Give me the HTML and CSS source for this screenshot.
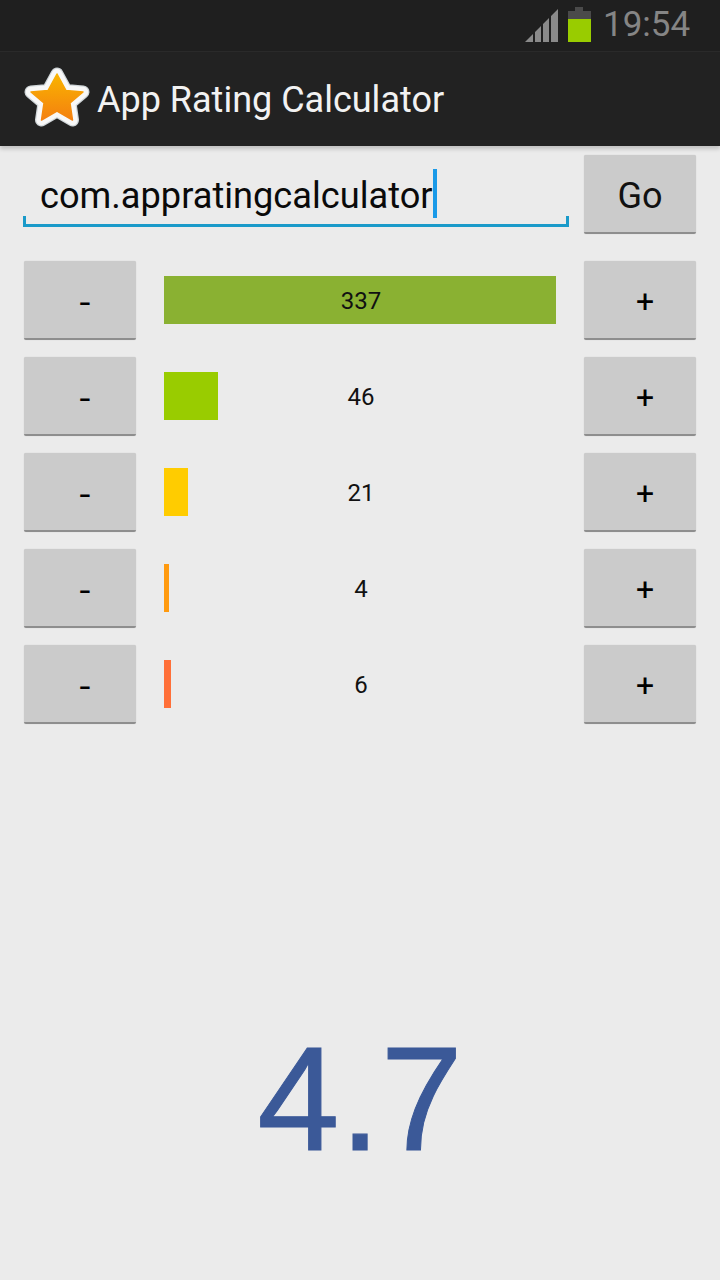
FILE: index.html
```
<!DOCTYPE html>
<html>
<head>
<meta charset="utf-8">
<title>App Rating Calculator</title>
<link rel="stylesheet" href="styles.css">
</head>
<body>
<div class="statusbar">
  <svg class="signal" width="33" height="33" viewBox="0 0 33 33">
    <path d="M0 33 L8 25 V33 Z M10 33 V23 L16 17 V33 Z M18 33 V15 L24 9 V33 Z M26 33 V7 L33 0 V33 Z" fill="#8a8a8a"/>
  </svg>
  <svg class="battery" width="23" height="35" viewBox="0 0 23 35">
    <path d="M7 0H15V4H23V12H0V4H7Z" fill="#4a4a4a"/>
    <rect x="0" y="12" width="23" height="23" fill="#99cc00"/>
  </svg>
  <span class="clock">19:54</span>
</div>
<div class="actionbar">
  <svg class="logo" width="68" height="68" viewBox="0 0 68 68">
    <defs>
      <linearGradient id="star" gradientUnits="userSpaceOnUse" x1="0" y1="9" x2="0" y2="56">
        <stop offset="0" stop-color="#f9b400"/>
        <stop offset="1" stop-color="#f47f10"/>
      </linearGradient>
      <path id="starshape" d="M35 9 L44 25.500 L61 27 L48 38 L50.500 55 L35 46 L19.500 55 L22 38 L9 27 L26 25.500 Z" stroke-linejoin="round"/>
    </defs>
    <use href="#starshape" fill="#cfd5d8" stroke="#cfd5d8" stroke-width="13"/>
    <use href="#starshape" fill="#f8f8f8" stroke="#f8f8f8" stroke-width="10.500"/>
    <use href="#starshape" fill="url(#star)" stroke="url(#star)" stroke-width="1.500"/>
  </svg>
  <span class="apptitle">App Rating Calculator</span>
</div>
<main class="content">
  <div class="row search">
    <div class="field">
      <span class="fieldtext">com.appratingcalculator</span><span class="caret"></span>
    </div>
    <div class="btn go">Go</div>
  </div>
  <div class="row rate">
    <div class="btn minus"><span>-</span></div>
    <div class="track"><div class="bar c5" style="width:392px"></div><span class="count">337</span></div>
    <div class="btn plus"><span>+</span></div>
  </div>
  <div class="row rate">
    <div class="btn minus"><span>-</span></div>
    <div class="track"><div class="bar c4" style="width:54px"></div><span class="count">46</span></div>
    <div class="btn plus"><span>+</span></div>
  </div>
  <div class="row rate">
    <div class="btn minus"><span>-</span></div>
    <div class="track"><div class="bar c3" style="width:24px"></div><span class="count">21</span></div>
    <div class="btn plus"><span>+</span></div>
  </div>
  <div class="row rate">
    <div class="btn minus"><span>-</span></div>
    <div class="track"><div class="bar c2" style="width:5px"></div><span class="count">4</span></div>
    <div class="btn plus"><span>+</span></div>
  </div>
  <div class="row rate">
    <div class="btn minus"><span>-</span></div>
    <div class="track"><div class="bar c1" style="width:7px"></div><span class="count">6</span></div>
    <div class="btn plus"><span>+</span></div>
  </div>
  <div class="result">4.7</div>
</main>
</body>
</html>
```
FILE: styles.css
```
* { box-sizing: border-box; }
html, body { margin: 0; padding: 0; }
body {
  width: 720px;
  height: 1280px;
  overflow: hidden;
  background: #ebebeb;
  font-family: Roboto, "Liberation Sans", sans-serif;
  color: #000;
}
.statusbar {
  height: 52px;
  background: #1f1f1f;
  border-bottom: 1px solid #2b2b2b;
  display: flex;
  align-items: flex-start;
  padding: 7px 29px 0 525px;
}
.signal { margin-top: 2px; flex: none; }
.battery { margin-left: 10px; flex: none; }
.clock {
  margin-left: 12px;
  font-size: 35px;
  line-height: 35px;
  color: #858585;
  white-space: nowrap;
}
.actionbar {
  height: 94px;
  background: #222222;
  display: flex;
  align-items: center;
  padding-left: 22px;
  box-shadow: 0 3px 4px rgba(0,0,0,0.18);
  position: relative;
}
.logo { flex: none; }
.apptitle {
  margin-left: 7px;
  margin-top: 2px;
  font-size: 36px;
  color: #f2f2f2;
  white-space: nowrap;
}
.content { padding: 8px 24px 0; }
.row { display: flex; }
.search { height: 80px; justify-content: space-between; }
.field {
  width: 546px;
  margin-left: -1px;
  height: 73px;
  padding: 18px 0 0 14px;
  display: flex;
  align-items: flex-start;
  border: solid #1a9ac9;
  border-width: 0 3px 3px;
  border-image: linear-gradient(to top, #1a9ac9 9px, transparent 9px) 1;
}
.fieldtext { font-size: 36.2px; line-height: 48px; white-space: nowrap; color: #0a0a0a; }
.caret { width: 4px; height: 49px; background: #1a9ae8; margin-top: -3px; flex: none; }
.btn {
  width: 112px;
  height: 79px;
  margin-top: 1px;
  background: #cbcbcb;
  border-bottom: 2px solid #8e8e8e;
  border-radius: 2px;
  box-shadow: 0 0 1px rgba(0,0,0,0.2);
  display: flex;
  align-items: center;
  justify-content: center;
  flex: none;
}
.go { font-size: 36px; color: #111; padding-top: 4px; }
.rate { height: 80px; margin-top: 16px; align-items: flex-start; justify-content: space-between; }
.search + .rate { margin-top: 26px; }
.minus { font-size: 28px; padding: 5px 0 0 10px; }
.minus span { display: block; transform: scale(1.4, 1.2); }
.plus { font-size: 32px; padding: 2px 0 0 10px; }
.track {
  width: 392px;
  height: 48px;
  margin-top: 16px;
  position: relative;
  display: flex;
  align-items: center;
  justify-content: center;
}
.bar { position: absolute; left: 0; top: 0; height: 48px; }
.c5 { background: #8ab132; }
.c4 { background: #99cc00; }
.c3 { background: #ffcc00; }
.c2 { background: #ff9a0f; }
.c1 { background: #ff6f38; }
.count { position: relative; top: 1px; font-size: 24px; color: #111; padding-left: 2px; }
.result {
  margin-top: 295px;
  text-align: center;
  font-family: "Liberation Sans", Arial, sans-serif;
  font-size: 148px;
  line-height: 160px;
  color: #3b5998;
  -webkit-text-stroke: 1px #3b5998;
}
```
